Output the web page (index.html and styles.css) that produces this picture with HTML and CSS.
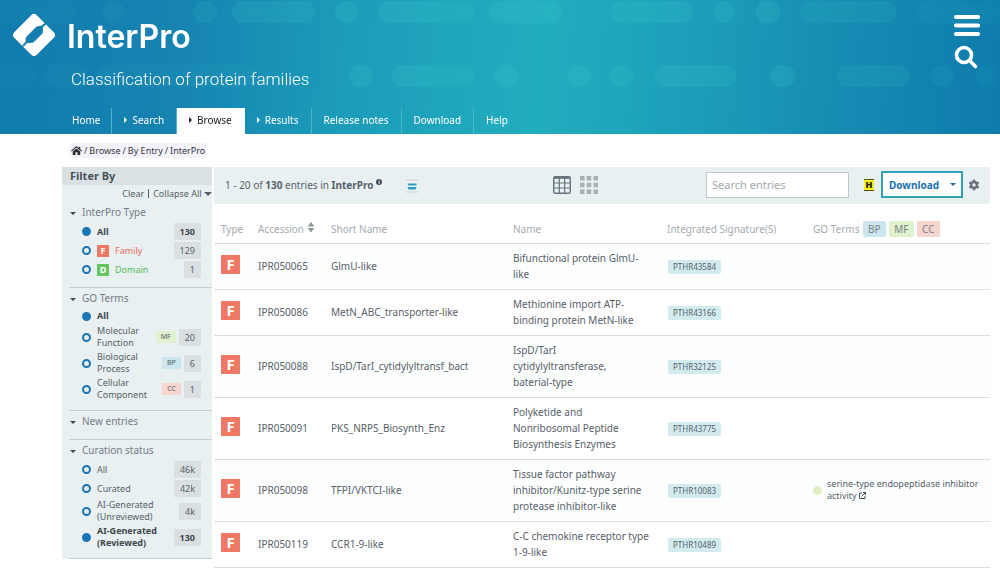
FILE: index.html
```html
<!DOCTYPE html>
<html lang="en">
<head>
<meta charset="utf-8">
<title>InterPro - Browse entries</title>
<link rel="stylesheet" href="styles.css">
</head>
<body>
<header class="banner">
  <svg class="banner-pattern" viewBox="0 0 1000 134" preserveAspectRatio="xMidYMin slice" aria-hidden="true">
    <g fill="#3fc9c9" opacity=".2">
      <rect x="-20" y="1" width="98" height="22" rx="11" opacity=".3"/><rect x="102" y="1" width="23" height="22" rx="11" opacity=".4"/><rect x="193" y="1" width="24" height="22" rx="11" opacity=".7"/><rect x="232" y="1" width="83" height="22" rx="11" opacity=".8"/><rect x="335" y="1" width="23" height="22" rx="11"/><rect x="378" y="1" width="96" height="22" rx="11"/><rect x="489" y="1" width="73" height="22" rx="11"/><rect x="611" y="1" width="81" height="22" rx="11"/><rect x="713" y="1" width="22" height="22" rx="11"/><rect x="756" y="1" width="24" height="22" rx="11"/><rect x="800" y="1" width="96" height="22" rx="11" opacity=".7"/><rect x="916" y="1" width="96" height="22" rx="11" opacity=".4"/>
      <rect x="-20" y="65" width="57" height="22" rx="11" opacity=".3"/><rect x="44" y="65" width="44" height="22" rx="11" opacity=".3"/><rect x="97" y="65" width="158" height="22" rx="11" opacity=".4"/><rect x="349" y="65" width="23" height="22" rx="11"/><rect x="392" y="65" width="82" height="22" rx="11"/><rect x="494" y="65" width="24" height="22" rx="11"/><rect x="567" y="65" width="23" height="22" rx="11"/><rect x="610" y="65" width="24" height="22" rx="11"/><rect x="654" y="65" width="82" height="22" rx="11"/><rect x="770" y="65" width="25" height="22" rx="11"/><rect x="837" y="65" width="73" height="22" rx="11" opacity=".7"/><rect x="931" y="65" width="23" height="22" rx="11" opacity=".5"/><rect x="975" y="65" width="21" height="22" rx="11" opacity=".4"/>
    </g>
  </svg>
  <div class="banner-top">
    <div class="brand">
      <a class="logo" href="#">
        <svg width="44" height="44" viewBox="0 0 44 44" aria-hidden="true">
          <mask id="cut"><rect width="44" height="44" fill="#fff"/><path d="M24 14.500 Q25 13.500 26.500 13.500 L29.500 13 L34 9.500 L34.600 10.300 L30.600 14.200 L30.500 18.500 Q30.500 20 29.500 21 L22 28.500 Q21 29.500 19.500 29.500 L15 29.700 L11.500 33.300 L10.700 32.500 L14 28.700 L14 26 Q14 24.700 15 23.600 Z" fill="#000" stroke="#000" stroke-width=".8"/></mask>
          <g mask="url(#cut)"><rect x="6" y="6" width="32" height="32" rx="4" transform="rotate(45 22 22)" fill="#fff"/></g>
        </svg>
        <span class="logo-name">InterPro</span>
      </a>
      <p class="tagline">Classification of protein families</p>
    </div>
    <div class="banner-actions">
      <button type="button" aria-label="Menu"><svg width="28" height="24" viewBox="0 0 28 24" stroke="#fff" stroke-width="4.200" stroke-linecap="round"><path d="M3 4H25M3 12.500H25M3 21H25"/></svg></button>
      <button type="button" aria-label="Search"><svg width="28" height="28" viewBox="0 0 28 28" fill="none" stroke="#fff" stroke-width="3.600" stroke-linecap="round"><circle cx="11" cy="12" r="7.500"/><path d="M17 18 L22.500 23.500"/></svg></button>
    </div>
  </div>
  <nav class="tabs">
    <a href="#">Home</a>
    <a href="#"><i class="caret-right"></i>Search</a>
    <a href="#" class="active"><i class="caret-right"></i>Browse</a>
    <a href="#"><i class="caret-right"></i>Results</a>
    <a href="#">Release notes</a>
    <a href="#">Download</a>
    <a href="#">Help</a>
  </nav>
</header>

<nav class="crumbs" aria-label="Breadcrumb">
  <a href="#" aria-label="Home"><svg width="11" height="9" viewBox="0 0 22 18" fill="#2d2d33"><path d="M11 0 L0 9.500 L1.500 11.200 L11 3.200 L20.500 11.200 L22 9.500 L18.500 6.500 V1.500 H15.500 V4 Z"/><path d="M11 5 L3.500 11.200 V18 H9 V12.500 H13 V18 H18.500 V11.200 Z"/></svg></a>
  <span>/</span><a href="#">Browse</a><span>/</span><a href="#">By Entry</a><span>/</span><a href="#">InterPro</a>
</nav>

<div class="layout">
  <aside class="filters">
    <h2 class="filters-title">Filter By</h2>
    <div class="filters-tools"><button type="button">Clear</button><span class="bar"></span><button type="button">Collapse All <i class="caret-down big"></i></button></div>

    <section class="group">
      <h3><i class="caret-down"></i>InterPro Type</h3>
      <label class="opt"><input type="radio" name="type" checked><b class="name">All</b><b class="count">130</b></label>
      <label class="opt"><input type="radio" name="type"><span class="mini family">F</span><span class="name family-text">Family</span><span class="count">129</span></label>
      <label class="opt"><input type="radio" name="type"><span class="mini domain">D</span><span class="name domain-text">Domain</span><span class="count">1</span></label>
    </section>

    <section class="group">
      <h3><i class="caret-down"></i>GO Terms</h3>
      <label class="opt short"><input type="radio" name="go" checked><b class="name">All</b></label>
      <label class="opt two"><input type="radio" name="go"><span class="name">Molecular Function</span><span class="tag mf">MF</span><span class="count">20</span></label>
      <label class="opt two"><input type="radio" name="go"><span class="name">Biological Process</span><span class="tag bp">BP</span><span class="count">6</span></label>
      <label class="opt two"><input type="radio" name="go"><span class="name">Cellular Component</span><span class="tag cc">CC</span><span class="count">1</span></label>
    </section>

    <section class="group">
      <h3><i class="caret-down"></i>New entries</h3>
    </section>

    <section class="group">
      <h3><i class="caret-down"></i>Curation status</h3>
      <label class="opt"><input type="radio" name="cur"><span class="name">All</span><span class="count">46k</span></label>
      <label class="opt"><input type="radio" name="cur"><span class="name">Curated</span><span class="count">42k</span></label>
      <label class="opt two"><input type="radio" name="cur"><span class="name">AI-Generated (Unreviewed)</span><span class="count">4k</span></label>
      <label class="opt two"><input type="radio" name="cur" checked><b class="name">AI-Generated (Reviewed)</b><b class="count">130</b></label>
    </section>
  </aside>

  <main class="results">
    <div class="toolbar">
      <p class="summary">1 - 20 of <b>130</b> entries in <b>InterPro</b> <sup class="info">i</sup></p>
      <svg class="stack" width="14" height="14" viewBox="0 0 14 14" aria-hidden="true"><rect x="1" y="0" width="12" height="2" fill="#dcdfe0"/><path d="M2.500 4.500H11.500V6.500H3.500ZM2.500 8H11.500L10.500 10.500H3.500Z" fill="#2a9fc4"/><rect x="1" y="12" width="12" height="2" fill="#dcdfe0"/></svg>
      <div class="views">
        <button type="button" aria-label="Table view"><svg width="18" height="18" viewBox="0 0 18 18" fill="none" stroke="#65747f"><rect x=".7" y=".7" width="16.600" height="16.600" rx="1.500" stroke-width="1.400"/><path d="M1 1.800H17" stroke-width="2"/><path d="M1 7H17M1 12H17M6.300 2V17M11.700 2V17" stroke-width="1.200"/></svg></button>
        <button type="button" aria-label="Grid view"><svg width="18" height="18" viewBox="0 0 18 18" fill="#a6b0b5"><path d="M0 0h4.500v4.500H0zM6.700 0h4.500v4.500h-4.500zM13.500 0h4.500v4.500h-4.500zM0 6.700h4.500v4.500H0zM6.700 6.700h4.500v4.500h-4.500zM13.500 6.700h4.500v4.500h-4.500zM0 13.500h4.500v4.500H0zM6.700 13.500h4.500v4.500h-4.500zM13.500 13.500h4.500v4.500h-4.500z"/></svg></button>
      </div>
      <input class="search" type="text" placeholder="Search entries" aria-label="Search entries">
      <button type="button" class="highlight" aria-label="Highlight">H</button>
      <button type="button" class="download">Download<i class="caret-down"></i></button>
      <button type="button" class="gear" aria-label="Settings"><svg width="12" height="12" viewBox="-6 -6 12 12"><g fill="#66737c"><circle r="4"/><rect x="-1.300" y="-5.300" width="2.600" height="10.600" rx=".5"/><rect x="-1.300" y="-5.300" width="2.600" height="10.600" rx=".5" transform="rotate(60)"/><rect x="-1.300" y="-5.300" width="2.600" height="10.600" rx=".5" transform="rotate(120)"/></g><circle r="1.700" fill="#e8f0f2"/></svg></button>
    </div>

    <table class="entries">
      <colgroup><col class="c-type"><col class="c-acc"><col class="c-short"><col class="c-name"><col class="c-sig"><col></colgroup>
      <thead>
        <tr><th>Type</th><th>Accession <svg class="sort" width="8" height="11" viewBox="0 0 8 11" fill="#8f979b"><path d="M4 0L7.500 4.500H.5ZM4 10.500L7.500 6H.5Z"/></svg></th><th>Short Name</th><th>Name</th><th>Integrated Signature(S)</th><th>GO Terms <span class="go bp">BP</span> <span class="go mf">MF</span> <span class="go cc">CC</span></th></tr>
      </thead>
      <tbody>
        <tr><td><span class="badge">F</span></td><td><a href="#">IPR050065</a></td><td><a href="#">GlmU-like</a></td><td><a href="#">Bifunctional protein GlmU-<br>like</a></td><td><a class="sig" href="#">PTHR43584</a></td><td></td></tr>
        <tr><td><span class="badge">F</span></td><td><a href="#">IPR050086</a></td><td><a href="#">MetN_ABC_transporter-like</a></td><td><a href="#">Methionine import ATP-<br>binding protein MetN-like</a></td><td><a class="sig" href="#">PTHR43166</a></td><td></td></tr>
        <tr><td><span class="badge">F</span></td><td><a href="#">IPR050088</a></td><td><a href="#">IspD/TarI_cytidylyltransf_bact</a></td><td><a href="#">IspD/TarI<br>cytidylyltransferase,<br>baterial-type</a></td><td><a class="sig" href="#">PTHR32125</a></td><td></td></tr>
        <tr><td><span class="badge">F</span></td><td><a href="#">IPR050091</a></td><td><a href="#">PKS_NRPS_Biosynth_Enz</a></td><td><a href="#">Polyketide and<br>Nonribosomal Peptide<br>Biosynthesis Enzymes</a></td><td><a class="sig" href="#">PTHR43775</a></td><td></td></tr>
        <tr><td><span class="badge">F</span></td><td><a href="#">IPR050098</a></td><td><a href="#">TFPI/VKTCI-like</a></td><td><a href="#">Tissue factor pathway<br>inhibitor/Kunitz-type serine<br>protease inhibitor-like</a></td><td><a class="sig" href="#">PTHR10083</a></td><td><div class="term"><i class="dot"></i><a href="#">serine-type endopeptidase inhibitor<br>activity <svg width="7" height="7" viewBox="0 0 14 14" fill="none" stroke="#333c44" stroke-width="1.800"><path d="M6 2H1V13H12V8M8 1H13V6M13 1L5 9"/></svg></a></div></td></tr>
        <tr><td><span class="badge">F</span></td><td><a href="#">IPR050119</a></td><td><a href="#">CCR1-9-like</a></td><td><a href="#">C-C chemokine receptor type<br>1-9-like</a></td><td><a class="sig" href="#">PTHR10489</a></td><td></td></tr>
      </tbody>
    </table>
  </main>
</div>
</body>
</html>
```
FILE: styles.css
```css
* { box-sizing: border-box; }
body { margin: 0; background: #fff; color: #56606a; font: 10px/16px "Noto Sans", sans-serif; }
a { color: inherit; text-decoration: none; }
button { margin: 0; padding: 0; border: 0; background: none; color: inherit; font: inherit; cursor: pointer; }
h2, h3, p { margin: 0; font: inherit; }
svg { display: block; }

.caret-right { width: 0; height: 0; border: 3px solid transparent; border-left: 3px solid currentColor; border-right: 0; }
.caret-down { display: inline-block; width: 0; height: 0; border: 3px solid transparent; border-top: 3px solid currentColor; border-bottom: 0; }
.caret-down.big { border-width: 4px; border-bottom: 0; vertical-align: 1px; }

/* Banner */
.banner { position: relative; overflow: hidden; background: linear-gradient(95deg, #107cae 0%, #1683b1 18%, #1c9dba 35%, #22adbe 54%, #1c9fba 68%, #1689b2 86%, #0e7bac 100%); color: #fff; }
.banner-pattern { position: absolute; inset: 0; width: 100%; height: 100%; }
.banner-top { position: relative; display: flex; justify-content: space-between; height: 108px; padding: 13px 19px 0 12px; }
.logo { display: flex; align-items: center; gap: 11px; height: 44px; }
.logo-name { padding-top: 4px; font: 600 32px/44px Inter, sans-serif; }
.tagline { padding: 10px 0 0 59px; font: 300 17px/24px Roboto, sans-serif; }
.banner-actions { display: flex; flex-direction: column; align-items: center; gap: 6px; }
.tabs { position: relative; display: flex; height: 26px; padding-left: 60px; }
.tabs a { display: flex; align-items: center; gap: 5px; padding: 0 12px 2px 12px; border-right: 1px solid #4db4ca; }
.tabs a:first-child { padding-right: 11px; }
.tabs a.active { background: #fff; color: #222; border-color: #fff; }
.tabs a:last-child { border: 0; }

.crumbs { display: flex; align-items: center; gap: 2px; width: fit-content; margin: 9px 0 9px 70px; height: 15px; padding: 0 1px; background: #f4f3fb; color: #35353f; font-size: 9px; }

.layout { display: flex; align-items: flex-start; gap: 2px; margin: 0 10px 0 62px; }

/* Filters */
.filters { flex: 0 0 150px; background: #e8f0f2; font-size: 9px; line-height: 12px; color: #555f66; }
.filters-title { padding-left: 8px; background: #dae1e2; font-size: 11px; font-weight: 700; line-height: 18px; color: #47525a; }
.filters-tools { display: flex; align-items: center; justify-content: flex-end; gap: 4px; height: 17px; }
.bar { width: 1px; height: 9px; background: #555f66; }
.group { margin-left: 7px; padding-bottom: 8px; border-bottom: 1px solid #c5cfd2; }
.group h3 { display: flex; align-items: center; gap: 6px; height: 20px; font-size: 10px; color: #717c83; }
.group h3 .caret-down { margin: 2px 0 0 1px; color: #3f484e; }
.opt { display: flex; align-items: center; gap: 6px; min-height: 19px; padding: 0 11px 0 13px; }
.opt.short { min-height: 16px; }
.opt.two { min-height: 26px; }
.opt input { appearance: none; flex: none; width: 9px; height: 9px; margin: 0; border: 2px solid #1b75b5; border-radius: 50%; }
.opt input:checked { background: #1b75b5; }
.opt .name { flex: 1; min-width: 0; }
.opt b { color: #3d464c; }
.count { padding: 0 6px; background: #dae0e2; line-height: 17px; }
.mini { width: 12px; color: #fff; font-weight: 700; text-align: center; }
.family, .badge { background: #ee7863; }
.domain { background: #65c55f; }
.family-text { color: #ee6a55; }
.domain-text { color: #55bb55; }
.tag { padding: 0 5px; font-size: 7px; margin-right: -3px; }
.bp { background: #cbe6ee; }
.mf { background: #dff1cd; }
.cc { background: #f8d5cd; }

/* Results */
.results { flex: 1; min-width: 0; }
.toolbar { display: flex; align-items: center; height: 37px; padding: 0 10px 2px 11px; background: #e8f0f2; }
.info { display: inline-block; width: 6px; height: 6px; border-radius: 50%; background: #3d4a53; color: #fff; font: 700 5px/6px Roboto, sans-serif; text-align: center; vertical-align: 5px; }
.stack { margin: 2px 0 0 23px; }
.views { display: flex; gap: 9px; margin: 0 108px 0 auto; }
.search { width: 143px; height: 26px; padding: 0 5px; border: 1px solid #bfc8cb; background: #fff; font: inherit; font-size: 11px; }
.search::placeholder { color: #a2a9ad; }
.highlight { width: 10px; margin: 0 7px 0 15px; border: solid #55551a; border-width: 1px 0; background: #f7f01a; color: #222; font-size: 9px; font-weight: 900; line-height: 10px; }
.download { display: flex; align-items: center; justify-content: space-between; width: 82px; height: 27px; margin-right: 5px; padding: 0 5px 0 6px; border: 2px solid #2ea2b4; background: #fff; color: #1a6fb0; font-weight: 700; }

.entries { width: 100%; border-collapse: separate; border-spacing: 0; table-layout: fixed; }
.c-type { width: 37px; }
.c-acc { width: 73px; }
.c-short { width: 182px; }
.c-name { width: 154px; }
.c-sig { width: 146px; }
.entries th { height: 40px; padding: 10px 0 0 7px; border-bottom: 1px solid #d8dee0; color: #a3abb0; font-weight: 400; text-align: left; white-space: nowrap; }
.entries td { padding: 6px 0 7px 7px; border-bottom: 1px solid #d8dee0; }
.entries tbody tr:nth-child(odd) { background: #fdfefe; }
.sort { display: inline-block; vertical-align: 0; }
.badge { display: block; width: 19px; margin-bottom: 4px; color: #fff; font: 700 15px/19px "Noto Sans", sans-serif; text-align: center; }
.sig { display: inline-block; margin-left: 1px; padding: 0 5px; border-radius: 2px; background: #d2ebef; font-size: 8px; line-height: 14px; }
.go { display: inline-block; margin-left: 1px; padding: 0 5px; border-radius: 2px; color: #798288; }
.term { display: flex; align-items: center; gap: 5px; font-size: 9px; line-height: 12px; }
.term svg { display: inline-block; }
.dot { flex: none; width: 9px; height: 9px; border-radius: 50%; background: #dff1c4; }
```
